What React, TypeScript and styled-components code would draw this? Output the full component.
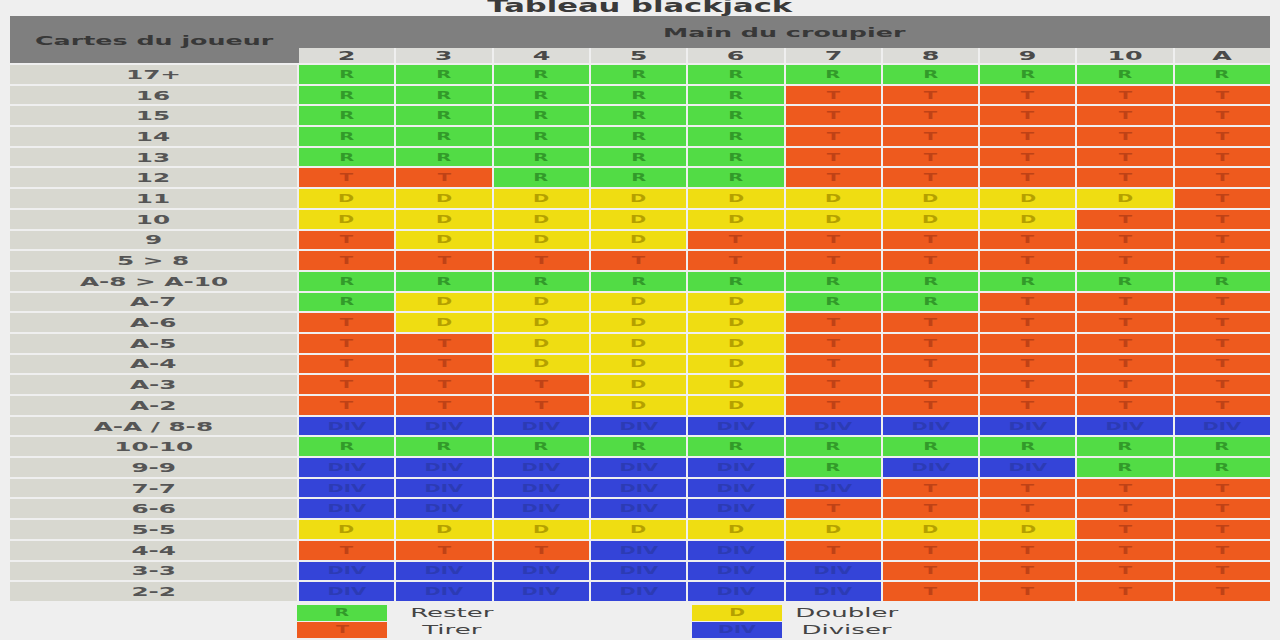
import React, { FC } from 'react'
import styled, { createGlobalStyle } from 'styled-components'

type Move = 'R' | 'T' | 'D' | 'DIV'

const GlobalStyle = createGlobalStyle`
  body {
    margin: 0;
    background: #efefef;
    font-family: "DejaVu Sans", "Liberation Sans", sans-serif;
    overflow: hidden;
  }
`

const palette: Record<Move, { bg: string; fg: string }> = {
  R: { bg: '#52dc45', fg: '#329a2a' },
  T: { bg: '#ee5a1e', fg: '#bf4216' },
  D: { bg: '#efdd12', fg: '#b4a000' },
  DIV: { bg: '#3444d8', fg: '#2c3bb4' },
}

const Page = styled.div`
  width: 1280px;
  height: 640px;
  overflow: hidden;
`

const Title = styled.h1`
  margin: -4px 0 0;
  height: 20px;
  line-height: 20px;
  font-size: 17px;
  font-weight: bold;
  color: #3a3a3a;
  text-align: center;
`

const Stretch = styled.span<{ $x?: number }>`
  display: inline-block;
  transform: scaleX(${p => p.$x ?? 1.9});
  white-space: nowrap;
`

const Table = styled.div`
  display: grid;
  grid-template-columns: 287px repeat(10, 1fr);
  grid-template-rows: 30px 15px;
  grid-auto-rows: 18.7px;
  gap: 2px;
  margin: 0 10px;
`

const CornerHead = styled.div`
  grid-row: 1 / span 2;
  background: #7f7f7f;
  color: #383838;
  font-size: 13px;
  font-weight: bold;
  display: flex;
  align-items: center;
  justify-content: center;
  margin-right: -2px;
  padding-top: 2px;
`

const DealerHead = styled.div`
  grid-column: 2 / span 10;
  background: #7f7f7f;
  color: #383838;
  font-size: 13px;
  font-weight: bold;
  display: flex;
  align-items: center;
  justify-content: center;
  margin-bottom: -2px;
`

const NumCell = styled.div`
  background: #dcdcd8;
  color: #4a4a4a;
  font-size: 13px;
  font-weight: bold;
  display: flex;
  align-items: center;
  justify-content: center;
`

const RowLabel = styled.div`
  background: #d8d8d0;
  color: #555;
  font-size: 13px;
  font-weight: bold;
  display: flex;
  align-items: center;
  justify-content: center;
`

const Cell = styled.div<{ $m: Move }>`
  background: ${p => palette[p.$m].bg};
  color: ${p => palette[p.$m].fg};
  font-size: 10px;
  font-weight: bold;
  display: flex;
  align-items: center;
  justify-content: center;
`

const Legend = styled.div`
  display: grid;
  grid-template-columns: 287px 90px 130px 175px 90px 130px;
  grid-template-rows: 16px 16px;
  row-gap: 1px;
  margin: 4px 10px 0;
`

const Swatch = styled(Cell)<{ $col: number }>`
  grid-column: ${p => p.$col};
`

const LegendText = styled.div<{ $col: number }>`
  grid-column: ${p => p.$col};
  color: #444;
  font-size: 13px;
  display: flex;
  align-items: center;
  justify-content: center;
`

const dealer = ['2', '3', '4', '5', '6', '7', '8', '9', '10', 'A']

const r = (s: string): Move[] =>
  s.split(' ').map(x => (x === 'V' ? 'DIV' : x) as Move)

const rows: [string, Move[]][] = [
  ['17+', r('R R R R R R R R R R')],
  ['16', r('R R R R R T T T T T')],
  ['15', r('R R R R R T T T T T')],
  ['14', r('R R R R R T T T T T')],
  ['13', r('R R R R R T T T T T')],
  ['12', r('T T R R R T T T T T')],
  ['11', r('D D D D D D D D D T')],
  ['10', r('D D D D D D D D T T')],
  ['9', r('T D D D T T T T T T')],
  ['5 > 8', r('T T T T T T T T T T')],
  ['A-8 > A-10', r('R R R R R R R R R R')],
  ['A-7', r('R D D D D R R T T T')],
  ['A-6', r('T D D D D T T T T T')],
  ['A-5', r('T T D D D T T T T T')],
  ['A-4', r('T T D D D T T T T T')],
  ['A-3', r('T T T D D T T T T T')],
  ['A-2', r('T T T D D T T T T T')],
  ['A-A / 8-8', r('V V V V V V V V V V')],
  ['10-10', r('R R R R R R R R R R')],
  ['9-9', r('V V V V V R V V R R')],
  ['7-7', r('V V V V V V T T T T')],
  ['6-6', r('V V V V V T T T T T')],
  ['5-5', r('D D D D D D D D T T')],
  ['4-4', r('T T T V V T T T T T')],
  ['3-3', r('V V V V V V T T T T')],
  ['2-2', r('V V V V V V T T T T')],
]

const App: FC = () => {
  return (
    <Page>
      <GlobalStyle />
      <Title>
        <Stretch $x={1.8}>Tableau blackjack</Stretch>
      </Title>

      <Table>
        <CornerHead>
          <Stretch $x={1.95}>Cartes du joueur</Stretch>
        </CornerHead>
        <DealerHead>
          <Stretch $x={1.95}>Main du croupier</Stretch>
        </DealerHead>
        {dealer.map(d => (
          <NumCell key={d}>
            <Stretch $x={1.95}>{d}</Stretch>
          </NumCell>
        ))}

        {rows.map(([label, moves]) => (
          <React.Fragment key={label}>
            <RowLabel>
              <Stretch $x={1.9}>{label}</Stretch>
            </RowLabel>
            {moves.map((m, i) => (
              <Cell key={i} $m={m}>
                <Stretch $x={1.95}>{m}</Stretch>
              </Cell>
            ))}
          </React.Fragment>
        ))}
      </Table>

      <Legend>
        <Swatch $m="R" $col={2}>
          <Stretch>R</Stretch>
        </Swatch>
        <LegendText $col={3}>
          <Stretch $x={2}>Rester</Stretch>
        </LegendText>
        <Swatch $m="D" $col={5}>
          <Stretch>D</Stretch>
        </Swatch>
        <LegendText $col={6}>
          <Stretch $x={2}>Doubler</Stretch>
        </LegendText>
        <Swatch $m="T" $col={2}>
          <Stretch>T</Stretch>
        </Swatch>
        <LegendText $col={3}>
          <Stretch $x={2}>Tirer</Stretch>
        </LegendText>
        <Swatch $m="DIV" $col={5}>
          <Stretch>DIV</Stretch>
        </Swatch>
        <LegendText $col={6}>
          <Stretch $x={2}>Diviser</Stretch>
        </LegendText>
      </Legend>
    </Page>
  )
}

export default App
